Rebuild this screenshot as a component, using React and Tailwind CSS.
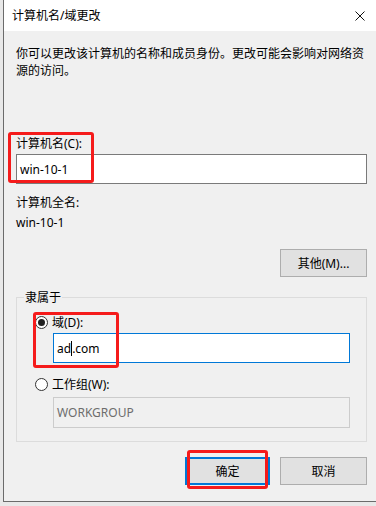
export default function App() {
  const font = "font-['Noto_Sans','Noto_Sans_CJK_SC',sans-serif]";
  return (
    <div className={`w-[376px] h-[506px] bg-[#e8e8e8] pl-[3px] overflow-hidden ${font} text-[12px] leading-[17px] text-black`}>
      <div className="w-[373px] h-[502px] border-l border-b border-[#6b6b6b] bg-[#f0f0f0] flex flex-col">
        {/* Title bar */}
        <div className="h-[31px] bg-white flex items-center justify-between pl-[8px] pr-[11px] shrink-0">
          <span className="text-[12px] leading-[17px]">计算机名/域更改</span>
          <svg width="10" height="10" viewBox="0 0 10 10" className="block">
            <path d="M0.5 0.5 L9.5 9.5 M9.5 0.5 L0.5 9.5" stroke="#111" strokeWidth="1" fill="none" />
          </svg>
        </div>
        {/* Body */}
        <div className="flex flex-col pl-[12px] pr-[9px] pt-[14px]">
          <p className="h-[34px]">你可以更改该计算机的名称和成员身份。更改可能会影响对网络资源的访问。</p>

          <div className="relative mt-[56px] flex flex-col">
            <div>计算机名(C):</div>
            <div className="mt-[2px] h-[30px] border border-[#7a7a7a] bg-white flex items-center pl-[3px]">win-10-1</div>
            <div className="absolute left-[-8px] top-[-3px] w-[86px] h-[51px] border-[3px] border-[#f51b1b] rounded-[3px] pointer-events-none" />
          </div>

          <div className="mt-[10px]">计算机全名:</div>
          <div className="mt-[3px]">win-10-1</div>

          <button className="self-end mt-[18px] w-[87px] h-[28px] border border-[#adadad] bg-[#e1e1e1] flex items-center justify-center">其他(M)...</button>

          <div className="relative mt-[20px] h-[145px] border border-[#dcdcdc] flex flex-col pl-[18px]">
            <span className="absolute left-[7px] top-[-9px] bg-[#f0f0f0] px-[1px]">隶属于</span>

            <div className="mt-[16px] h-[17px] flex items-center gap-[4px]">
              <span className="w-[13px] h-[13px] rounded-full border border-[#333] bg-white flex items-center justify-center">
                <span className="w-[7px] h-[7px] rounded-full bg-[#222]" />
              </span>
              <span>域(D):</span>
            </div>
            <div className="mt-[2px] ml-[18px] w-[297px] h-[30px] border border-[#0078d7] bg-white flex items-center pl-[3px]">
              <span>ad</span>
              <span className="inline-block w-px h-[15px] bg-black" />
              <span>.com</span>
            </div>

            <div className="mt-[13px] h-[17px] flex items-center gap-[4px]">
              <span className="w-[13px] h-[13px] rounded-full border border-[#333] bg-white" />
              <span>工作组(W):</span>
            </div>
            <div className="mt-[4px] ml-[18px] w-[297px] h-[31px] border border-[#cccccc] bg-[#f0f0f0] flex items-center pl-[3px] text-[#6d6d6d]">WORKGROUP</div>

            <div className="absolute left-[16px] top-[14px] w-[86px] h-[56px] border-[3px] border-[#f51b1b] rounded-[3px] pointer-events-none" />
          </div>

          <div className="mt-[15px] flex justify-end gap-[10px]">
            <div className="relative">
              <button className="w-[85px] h-[28px] border-2 border-[#0078d7] bg-[#e1e1e1] flex items-center justify-center">确定</button>
              <div className="absolute left-[2px] right-[2px] top-[-7px] bottom-[-4px] border-[3px] border-[#f51b1b] rounded-[3px] pointer-events-none" />
            </div>
            <button className="w-[87px] h-[28px] border border-[#adadad] bg-[#e1e1e1] flex items-center justify-center">取消</button>
          </div>
        </div>
      </div>
    </div>
  );
}
